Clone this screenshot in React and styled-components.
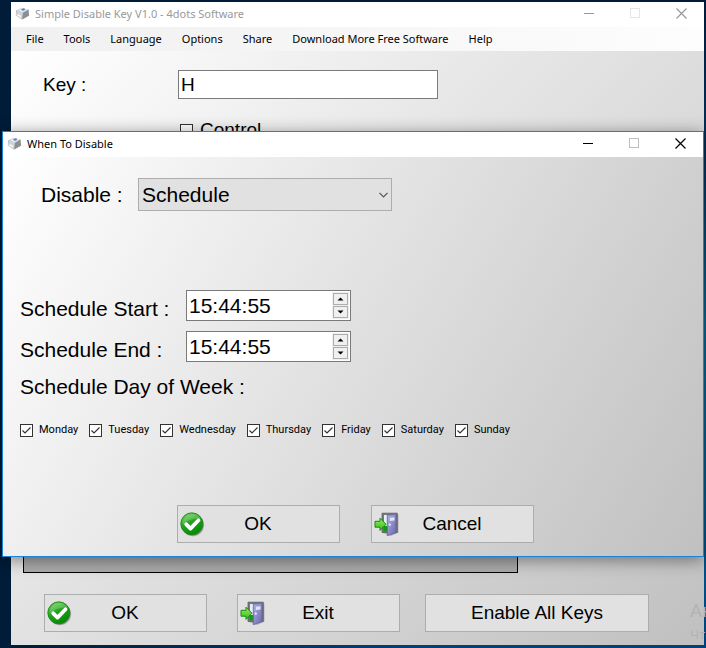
import React, { useState } from 'react'
import styled, { createGlobalStyle } from 'styled-components'

const days = ['Monday', 'Tuesday', 'Wednesday', 'Thursday', 'Friday', 'Saturday', 'Sunday']
const menuItems = ['File', 'Tools', 'Language', 'Options', 'Share', 'Download More Free Software', 'Help']

export default function App() {
    return (
        <Desktop>
            <GlobalStyle />
            <MainWindow>
                <TitleBar title='Simple Disable Key V1.0 - 4dots Software' inactive />
                <MenuBar>
                    {menuItems.map(item => <MenuButton key={item} type='button'>{item}</MenuButton>)}
                </MenuBar>
                <MainBody>
                    <KeyRow>
                        <Label htmlFor='key' $small>Key :</Label>
                        <KeyInput id='key' type='text' defaultValue='H' />
                    </KeyRow>
                    <ControlLabel>
                        <CheckBox type='checkbox' />
                        Control
                    </ControlLabel>
                    <KeyList />
                    <MainButtons>
                        <PushButton type='button'><OkIcon /><span>OK</span></PushButton>
                        <PushButton type='button'><ExitIcon /><span>Exit</span></PushButton>
                        <PushButton type='button' $wide><span>Enable All Keys</span></PushButton>
                    </MainButtons>
                </MainBody>
            </MainWindow>
            <Watermark>
                <WatermarkTitle>Ак</WatermarkTitle>
                <WatermarkText>Чт</WatermarkText>
            </Watermark>
            <ScheduleDialog />
        </Desktop>
    )
}

function TitleBar({ title, inactive }) {
    return (
        <Bar $inactive={inactive}>
            <KeyCapIcon />
            <BarTitle>{title}</BarTitle>
            <BarButton type='button' aria-label='Minimize'>
                <svg width='11' height='11' viewBox='0 0 11 11' shapeRendering='crispEdges'>
                    <path d='M0 5.5h10' stroke='currentColor' />
                </svg>
            </BarButton>
            <BarButton type='button' aria-label='Maximize' disabled>
                <svg width='11' height='11' viewBox='0 0 11 11' shapeRendering='crispEdges'>
                    <rect x='.5' y='.5' width='9' height='9' fill='none' stroke='currentColor' />
                </svg>
            </BarButton>
            <BarButton type='button' aria-label='Close'>
                <svg width='11' height='11' viewBox='0 0 11 11'>
                    <path d='M.5.5l10 10M10.5.5l-10 10' stroke='currentColor' strokeWidth='1.2' />
                </svg>
            </BarButton>
        </Bar>
    )
}

function ScheduleDialog() {
    return (
        <Dialog role='dialog' aria-label='When To Disable'>
            <TitleBar title='When To Disable' />
            <DialogBody>
                <DisableRow>
                    <Label htmlFor='disable'>Disable :</Label>
                    <SelectBox>
                        <Select id='disable' defaultValue='Schedule'>
                            <option>Schedule</option>
                        </Select>
                        <Chevron width='9' height='6' viewBox='0 0 9 6'>
                            <path d='M.5.8l4 4 4-4' fill='none' stroke='#555' strokeWidth='1.2' />
                        </Chevron>
                    </SelectBox>
                </DisableRow>
                <TimeGrid>
                    <Label htmlFor='start'>Schedule Start :</Label>
                    <TimePicker id='start' />
                    <Label htmlFor='end'>Schedule End :</Label>
                    <TimePicker id='end' />
                </TimeGrid>
                <DaysTitle>Schedule Day of Week :</DaysTitle>
                <DayList>
                    {days.map(day => (
                        <DayLabel key={day}>
                            <CheckBox type='checkbox' defaultChecked />
                            {day}
                        </DayLabel>
                    ))}
                </DayList>
                <DialogButtons>
                    <PushButton type='button'><OkIcon /><span>OK</span></PushButton>
                    <PushButton type='button'><ExitIcon /><span>Cancel</span></PushButton>
                </DialogButtons>
            </DialogBody>
        </Dialog>
    )
}

function TimePicker({ id }) {
    const [time, setTime] = useState('15:44:55')

    // steps the hour, wrapping at midnight
    const step = (by) => {
        const [h, ...rest] = time.split(':')
        const hour = (Number(h) + by + 24) % 24
        setTime([String(hour).padStart(2, '0'), ...rest].join(':'))
    }

    return (
        <TimeBox>
            <TimeInput id={id} type='text' value={time} onChange={e => setTime(e.target.value)} />
            <Spinner>
                <SpinButton type='button' aria-label='Up' onClick={() => step(1)}>
                    <svg width='7' height='4' viewBox='0 0 7 4'><path d='M.5 3.500L3.500.5l3 3z' /></svg>
                </SpinButton>
                <SpinButton type='button' aria-label='Down' onClick={() => step(-1)}>
                    <svg width='7' height='4' viewBox='0 0 7 4'><path d='M.5.5l3 3 3-3z' /></svg>
                </SpinButton>
            </Spinner>
        </TimeBox>
    )
}

function KeyCapIcon() {
    return (
        <svg width='15' height='13' viewBox='0 0 15 13'>
            <path d='M1 3.500L6.500.8l7.500 2-1 6.400-6.200 3.300L.8 8.200z' fill='#b5b9bc' />
            <path d='M2.400 2.900L7 .8l6 1.800-5 3.200z' fill='#e6eaed' />
            <path d='M2.400 2.900L8 5.800l-.8 6.500L.8 8.200z' fill='#d0d3d5' />
            <path d='M8 5.800l5.200-3.100 1 5.800-7 3.900z' fill='#8b8f93' />
            <path d='M3 7l3 1.800v2L2 8.300z' fill='#f6f6f6' />
            <path d='M6 2.200l2.600-.9 1.600.8-1 1.300-1.800.4z' fill='#3f8fd0' />
        </svg>
    )
}

function OkIcon() {
    return (
        <svg width='25' height='25' viewBox='0 0 25 25'>
            <defs>
                <linearGradient id='ok' x1='.2' y1='0' x2='.7' y2='1'>
                    <stop offset='0' stopColor='#6fd05a' />
                    <stop offset='.45' stopColor='#22a31b' />
                    <stop offset='1' stopColor='#008a00' />
                </linearGradient>
            </defs>
            <circle cx='13' cy='13.200' r='11.200' fill='#000' opacity='.18' />
            <circle cx='12.600' cy='12.800' r='11' fill='#000' opacity='.25' />
            <circle cx='11.800' cy='11.800' r='11' fill='url(#ok)' stroke='#168312' strokeWidth='.8' />
            <path d='M2.500 12.500C3 5 8 2 12.500 2c4 0 7 2 8.500 5-6-1.500-13 1-18.500 5.500z' fill='#fff' opacity='.2' />
            <path d='M6.200 12.300l4.300 4.300 8-8.300' fill='none' stroke='#fff' strokeWidth='3.800' strokeLinecap='round' strokeLinejoin='round' />
        </svg>
    )
}

function ExitIcon() {
    return (
        <svg width='25' height='25' viewBox='0 0 25 25'>
            <defs>
                <linearGradient id='door' x1='0' y1='0' x2='1' y2='1'>
                    <stop offset='0' stopColor='#b1b1e4' />
                    <stop offset='1' stopColor='#6767ae' />
                </linearGradient>
                <linearGradient id='arrow' x1='0' y1='0' x2='0' y2='1'>
                    <stop offset='0' stopColor='#9bea5c' />
                    <stop offset='1' stopColor='#35bb20' />
                </linearGradient>
            </defs>
            <path d='M9 2.500h15.500v18.300L17 24l-8-3z' fill='#000' opacity='.2' />
            <path d='M8 1.200h15.300v19.300H8z' fill='#77777d' stroke='#606066' strokeWidth='.8' />
            <path d='M10 3h6v16h-6z' fill='#e2f1f4' />
            <path d='M9.500 14h4.500v5.500H9.500z' fill='#159a18' />
            <path d='M13.300 3.300L22 1.800v18.900l-8.700 3z' fill='url(#door)' stroke='#6262a0' strokeWidth='.8' />
            <path d='M15.800 5.800l4.700-.6v3.200l-4.700.6z' fill='#dfe6f8' />
            <circle cx='15.800' cy='12.700' r='1.100' fill='#eeeefa' />
            <path d='M1 9.300h5V6.200l6 6-6 6.200v-3.200H1z' fill='url(#arrow)' stroke='#168b12' strokeWidth='1' />
        </svg>
    )
}

const GlobalStyle = createGlobalStyle`
    * {
        box-sizing: border-box;
    }

    body {
        margin: 0;
        font-family: 'Liberation Sans', Arial, sans-serif;
        color: #000;
    }

    button, input, select {
        font-family: inherit;
        color: inherit;
        margin: 0;
    }
`

const Desktop = styled.div`
    position: relative;
    display: flex;
    min-height: 100vh;
    padding: 2px 2px 3px 11px;
    overflow: hidden;
    background: linear-gradient(90deg, #001c38 0%, #001c38 2%, transparent 60%),
        linear-gradient(180deg, #001a3a 0%, #06325a 25%, #0d6a94 50%, #075a8c 80%, #00407c 100%);
`

const MainWindow = styled.div`
    flex: 1;
    display: flex;
    flex-direction: column;
    min-width: 0;
`

const Bar = styled.header`
    display: flex;
    align-items: center;
    height: 25px;
    padding: 0 0 2px 4px;
    background: #fff;
    color: ${props => props.$inactive ? '#999' : '#000'};
`

const BarTitle = styled.span`
    flex: 1;
    padding-left: 5px;
    font-family: 'Noto Sans', 'Open Sans', sans-serif;
    font-size: 11px;
    line-height: 16px;
`

const BarButton = styled.button`
    display: flex;
    align-items: center;
    justify-content: center;
    width: 46px;
    height: 23px;
    padding: 0;
    border: none;
    background: none;

    &:disabled {
        opacity: 0.25;
    }
`

const MenuBar = styled.nav`
    display: flex;
    height: 24px;
    padding-left: 5px;
    background: linear-gradient(90deg, #f0f0f0, #fdfdfd);
`

const MenuButton = styled.button`
    padding: 0 10px;
    border: none;
    background: none;
    font-family: 'Noto Sans', 'Open Sans', sans-serif;
    font-size: 11px;
    line-height: 24px;
    white-space: nowrap;
`

const MainBody = styled.main`
    flex: 1;
    display: flex;
    flex-direction: column;
    padding: 19px 12px 13px;
    background: linear-gradient(135deg, #fff, #c0c0c0);
`

const KeyRow = styled.div`
    display: grid;
    grid-template-columns: 135px 260px;
    align-items: center;
    padding-left: 20px;
`

const Label = styled.label`
    font-size: ${props => props.$small ? '19px' : '21px'};
    line-height: 24px;
    white-space: nowrap;
`

const KeyInput = styled.input`
    height: 29px;
    padding: 0 2px;
    border: 1px solid #7a7a7a;
    background: #fff;
    font-size: 19px;
`

const CheckBox = styled.input`
    appearance: none;
    flex: none;
    width: 13px;
    height: 13px;
    border: 1px solid #333;
    background: #fff;

    &:checked {
        background: #fff url("data:image/svg+xml,%3Csvg xmlns='http://www.w3.org/2000/svg' viewBox='0 0 11 11'%3E%3Cpath d='M1.500 5.500l2.500 2.500 5.500-5.500' fill='none' stroke='%23333' stroke-width='1.200'/%3E%3C/svg%3E");
    }
`

const ControlLabel = styled.label`
    display: flex;
    align-items: center;
    gap: 7px;
    padding: 19px 0 0 157px;
    font-size: 19px;
    line-height: 24px;
`

const KeyList = styled.div`
    flex: 1;
    width: 495px;
    max-width: 100%;
    border: 1px solid #000;
    background: #ababab;
`

const MainButtons = styled.div`
    display: grid;
    grid-template-columns: 193px 188px 224px;
    padding: 21px 0 0 21px;
`

const PushButton = styled.button`
    display: flex;
    align-items: center;
    width: ${props => props.$wide ? '224px' : '163px'};
    height: 38px;
    padding: 0 2px;
    border: 1px solid #adadad;
    background: #e1e1e1;
    font-size: 19px;
    line-height: 24px;

    span {
        flex: 1;
        text-align: center;
    }

    svg + span {
        padding-right: 26px;
    }
`

const Watermark = styled.div`
    position: absolute;
    left: 690px;
    bottom: 4px;
    font-family: 'Open Sans', sans-serif;
    color: #b2b2b2;
    white-space: nowrap;
`

const WatermarkTitle = styled.div`
    font-size: 19px;
    line-height: 27px;
`

const WatermarkText = styled.div`
    font-size: 13px;
    line-height: 20px;
`

const Dialog = styled.section`
    position: absolute;
    top: 131px;
    left: 2px;
    right: 2px;
    border: 1px solid #1883d7;
    box-shadow: 0 3px 16px rgba(0, 0, 0, 0.45);
`

const DialogBody = styled.div`
    padding: 21px 17px 13px;
    background: linear-gradient(120deg, #fff, #c0c0c0);
`

const DisableRow = styled.div`
    display: grid;
    grid-template-columns: 97px 254px;
    align-items: center;
    padding-left: 21px;
`

const SelectBox = styled.div`
    position: relative;
`

const Select = styled.select`
    appearance: none;
    display: block;
    width: 100%;
    height: 33px;
    padding: 0 3px;
    border: 1px solid #adadad;
    border-radius: 0;
    background: #e1e1e1;
    font-size: 21px;
`

const Chevron = styled.svg`
    position: absolute;
    right: 4px;
    top: 14px;
    pointer-events: none;
`

const TimeGrid = styled.div`
    display: grid;
    grid-template-columns: 166px 165px;
    row-gap: 10px;
    align-items: end;
    padding-top: 79px;
`

const TimeBox = styled.div`
    display: flex;
    height: 31px;
    padding: 1px;
    border: 1px solid #7a7a7a;
    background: #fff;
`

const TimeInput = styled.input`
    flex: 1;
    min-width: 0;
    padding: 0 1px;
    border: none;
    background: none;
    font-size: 21px;
`

const Spinner = styled.div`
    display: flex;
    flex-direction: column;
    gap: 1px;
    padding: 1px;
    background: #f0f0f0;
`

const SpinButton = styled.button`
    flex: 1;
    display: flex;
    align-items: center;
    justify-content: center;
    width: 15px;
    padding: 0;
    border: 1px solid #adadad;
    background: #f0f0f0;
`

const DaysTitle = styled.div`
    padding-top: 13px;
    font-size: 21px;
    line-height: 24px;
`

const DayList = styled.div`
    display: flex;
    flex-wrap: wrap;
    gap: 11px;
    padding-top: 23px;
`

const DayLabel = styled.label`
    display: flex;
    align-items: center;
    gap: 6px;
    font-family: Roboto, 'Liberation Sans', sans-serif;
    font-size: 11px;
    line-height: 16px;
`

const DialogButtons = styled.div`
    display: flex;
    gap: 31px;
    padding: 67px 0 0 157px;
`
